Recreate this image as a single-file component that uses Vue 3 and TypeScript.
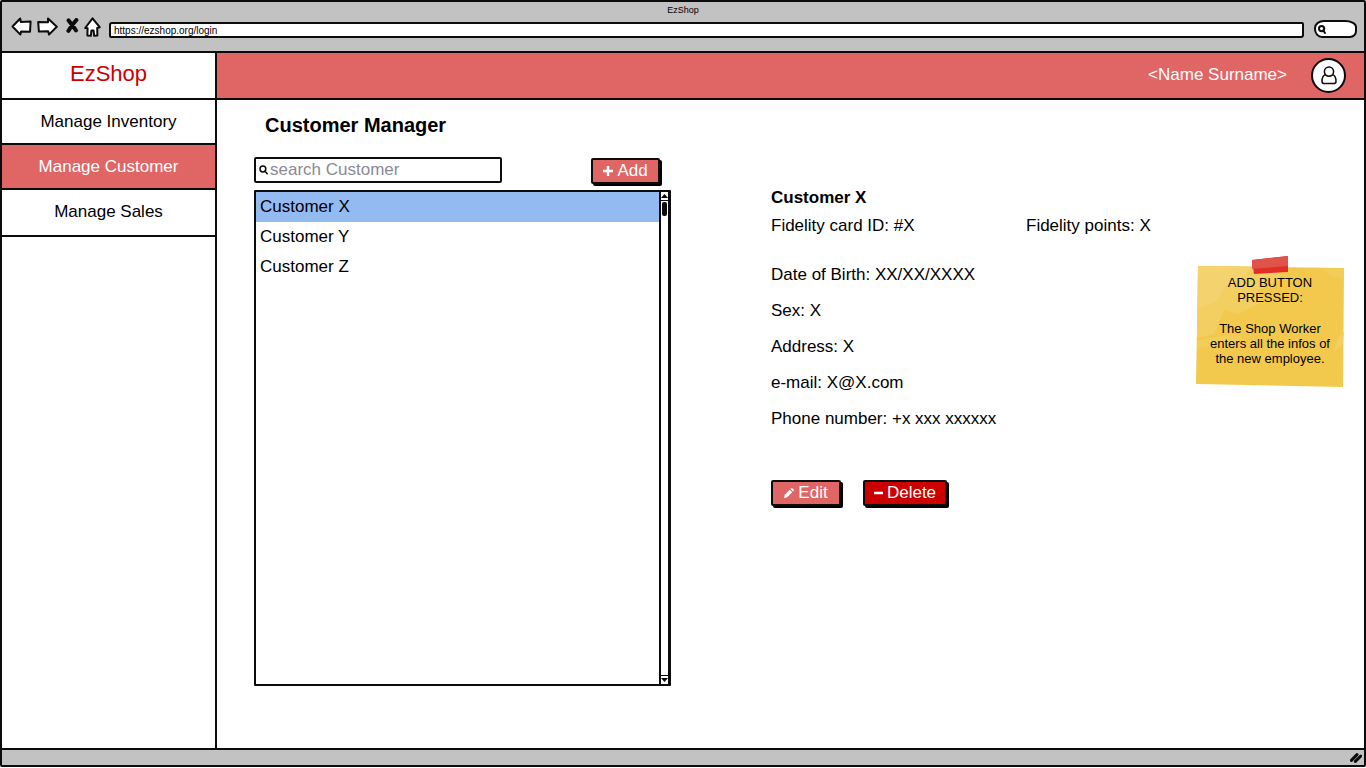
<script setup lang="ts">
import { ref } from 'vue'

interface Customer {
  name: string
  card: string
  points: string
  facts: { label: string; value: string }[]
}

const facts = [
  { label: 'Date of Birth:', value: 'XX/XX/XXXX' },
  { label: 'Sex:', value: 'X' },
  { label: 'Address:', value: 'X' },
  { label: 'e-mail:', value: 'X@X.com' },
  { label: 'Phone number:', value: '+x xxx xxxxxx' },
]

const customers: Customer[] = ['X', 'Y', 'Z'].map((letter) => ({
  name: `Customer ${letter}`,
  card: '#X',
  points: 'X',
  facts,
}))

const sections = ['Manage Inventory', 'Manage Customer', 'Manage Sales']
const activeSection = ref('Manage Customer')
const selected = ref(0)
const address = ref('https://ezshop.org/login')
const query = ref('')
const webQuery = ref('')
</script>

<template>
  <div class="window">
    <header class="chrome">
      <p class="window-title">EzShop</p>
      <div class="toolbar">
        <button class="tool" type="button" aria-label="Back">
          <svg width="21" height="19" viewBox="0 0 21 19"><path d="M1.5 9.5 9.2 1.5 9.8 5 19.6 4.6 19 14.8 10 14.6 9.4 17.6Z" /></svg>
        </button>
        <button class="tool" type="button" aria-label="Forward">
          <svg width="21" height="19" viewBox="0 0 21 19"><path d="M1.2 5 11 5.2 11 1.6 19.8 9.8 12 17.6 11.2 14.2 1.9 14.6Z" /></svg>
        </button>
        <button class="tool stop" type="button" aria-label="Stop">
          <svg width="13" height="15" viewBox="0 0 13 15"><path d="M2.6 2.4 6.2 7 10 12.4M10.4 2 6.2 7 2.4 12.8" /></svg>
        </button>
        <button class="tool home" type="button" aria-label="Home">
          <svg width="17" height="20" viewBox="0 0 17 20"><path d="M8.5 1.4 15.7 10.2 13.2 11 13.4 18.6 10.2 18.8 9.6 13.6 7.4 13.6 6.8 18.8 3.4 18.4 3.6 11.2 1.2 11Z" /></svg>
        </button>
        <input v-model="address" class="address" type="text" aria-label="Address" />
        <label class="web-search">
          <svg width="8" height="9" viewBox="0 0 8 9"><circle cx="3.6" cy="3.6" r="2.6" /><path d="M5.4 5.4 7 8" /></svg>
          <input v-model="webQuery" type="text" aria-label="Search the web" />
        </label>
      </div>
    </header>

    <div class="topbar">
      <a class="brand" href="#">EzShop</a>
      <div class="account">
        <span class="account-name">&lt;Name Surname&gt;</span>
        <button class="avatar" type="button" aria-label="Account">
          <svg width="16" height="19" viewBox="0 0 16 19">
            <circle cx="8" cy="5.6" r="4.6" />
            <path d="M4.4 8.6C2.2 9.4 1 11.6 1 15.2 1 16.8 1.8 17.6 3.2 17.6H12.8C14.2 17.6 15 16.8 15 15.2 15 11.6 13.8 9.4 11.6 8.6" />
          </svg>
        </button>
      </div>
    </div>

    <div class="body">
      <nav class="sidebar">
        <a
          v-for="section in sections"
          :key="section"
          href="#"
          :class="{ active: section === activeSection }"
          @click.prevent="activeSection = section"
        >{{ section }}</a>
      </nav>

      <main class="main">
        <section class="browser">
          <h1>Customer Manager</h1>
          <div class="actions">
            <label class="search">
              <svg width="9" height="10" viewBox="0 0 9 10"><circle cx="3.9" cy="4" r="2.9" /><path d="M6 6.2 8.2 8.8" /></svg>
              <input v-model="query" type="text" placeholder="search Customer" aria-label="Search customer" />
            </label>
            <button class="btn add" type="button">
              <svg width="10" height="10" viewBox="0 0 10 10"><path d="M5 0V10M0 5H10" /></svg>
              Add
            </button>
          </div>
          <div class="listbox">
            <ul>
              <li v-for="(customer, index) in customers" :key="customer.name">
                <button type="button" :class="{ chosen: index === selected }" @click="selected = index">
                  {{ customer.name }}
                </button>
              </li>
            </ul>
            <div class="scrollbar">
              <button type="button" aria-label="Scroll up">
                <svg width="7" height="4" viewBox="0 0 7 4"><path d="M3.5 0 7 4H0Z" /></svg>
              </button>
              <div class="track"><div class="thumb"></div></div>
              <button type="button" aria-label="Scroll down">
                <svg width="7" height="4" viewBox="0 0 7 4"><path d="M0 0H7L3.5 4Z" /></svg>
              </button>
            </div>
          </div>
        </section>

        <section class="detail">
          <h2>{{ customers[selected].name }}</h2>
          <div class="fidelity">
            <p>Fidelity card ID: {{ customers[selected].card }}</p>
            <p>Fidelity points: {{ customers[selected].points }}</p>
          </div>
          <div class="facts">
            <p v-for="fact in customers[selected].facts" :key="fact.label">{{ fact.label }} {{ fact.value }}</p>
          </div>
          <div class="buttons">
            <button class="btn edit" type="button">
              <svg width="10" height="10" viewBox="0 0 10 10"><path class="solid" d="M0 10 .7 6.8 5.7 1.8 8.2 4.3 3.2 9.3ZM6.4 1.1 7.3.2Q7.8-.2 8.4.3L9.7 1.6Q10.2 2.2 9.8 2.7L8.9 3.6Z" /></svg>
              Edit
            </button>
            <button class="btn delete" type="button">
              <svg width="9" height="10" viewBox="0 0 9 10"><path d="M0 5H9" /></svg>
              Delete
            </button>
          </div>
        </section>

        <aside class="note">
          <svg class="paper" viewBox="0 0 148 132" preserveAspectRatio="none" aria-hidden="true">
            <path d="M2 10 148 12 147 131 0 128Z" fill="#f2c94c" />
            <path d="M2 10 92 11 80 26 62 34 66 46 42 58 28 54 18 78 1 82Z" fill="#f3ce60" />
            <path d="M2 10 56 11 48 22 30 30 20 46 2 52Z" fill="#f4d26e" />
            <path d="M1 84 28 80 42 78 48 84 30 88 1 92Z" fill="#f3cd5a" />
            <path d="M148 76 142 82 138 96 147 88Z" fill="#f4cf62" />
            <path d="M124 12 148 13 148 22 136 20Z" fill="#f3cd5a" />
            <path d="M56 4 92 0 92 16 58 18Z" fill="#df2f26" />
            <path d="M56 4 92 0 92 10 56 13Z" fill="#e0534b" />
          </svg>
          <p>ADD BUTTON<br />PRESSED:</p>
          <p>The Shop Worker<br />enters all the infos of<br />the new employee.</p>
        </aside>
      </main>
    </div>

    <footer class="statusbar">
      <svg width="12" height="10" viewBox="0 0 12 10" aria-hidden="true"><path d="M1.4 7.4 7 1.6M5.4 8.4 10.8 3" /></svg>
    </footer>
  </div>
</template>

<style>
body {
  margin: 0;
  background: #fff;
}
</style>

<style scoped>
* {
  box-sizing: border-box;
}

.window {
  --ink: #0c0c0c;
  --coral: #e06666;
  --red: #cc0000;
  --grey: #c2c2c2;
  display: flex;
  flex-direction: column;
  min-height: calc(100vh - 1px);
  border: 2px solid var(--ink);
  border-radius: 2px;
  font-family: "Liberation Sans", Arial, sans-serif;
  font-size: 17px;
  line-height: 20px;
  color: #000;
}

h1,
h2,
p,
ul {
  margin: 0;
  padding: 0;
}

button,
input {
  font: inherit;
  color: inherit;
  padding: 0;
  border: 0;
  background: none;
}

a {
  color: inherit;
  text-decoration: none;
}

svg {
  display: block;
  flex: none;
  fill: none;
  stroke: var(--ink);
  stroke-width: 2;
  stroke-linejoin: round;
  stroke-linecap: round;
}

.chrome {
  height: 51px;
  background: var(--grey);
  border-bottom: 2px solid var(--ink);
}

.window-title {
  height: 15px;
  font-size: 9px;
  line-height: 16px;
  text-align: center;
}

.toolbar {
  display: flex;
  align-items: flex-start;
  padding: 0 7px 0 9px;
}

.tool {
  margin-right: 5px;
}

.tool svg {
  fill: #fff;
}

.stop {
  margin: 1px 5px 0 3px;
}

.stop svg {
  fill: none;
  stroke-width: 4;
}

.home {
  margin-right: 8px;
}

.address {
  flex: 1;
  min-width: 0;
  height: 16px;
  margin: 5px 10px 0 0;
  padding: 0 3px;
  font-size: 10px;
  line-height: 12px;
  background: #fff;
  border: 2px solid var(--ink);
  border-radius: 3px 2px 3px 2px;
}

.web-search {
  display: flex;
  align-items: center;
  width: 43px;
  height: 18px;
  margin-top: 3px;
  padding-left: 2px;
  background: #fff;
  border: 2px solid var(--ink);
  border-radius: 10px 12px 7px 8px / 8px 7px 7px 9px;
}

.web-search input {
  width: 24px;
}

.topbar {
  display: flex;
  height: 47px;
  border-bottom: 2px solid var(--ink);
}

.brand {
  width: 215px;
  border-right: 2px solid var(--ink);
  font-size: 22px;
  line-height: 41px;
  text-align: center;
  color: var(--red);
}

.account {
  flex: 1;
  display: flex;
  align-items: center;
  justify-content: flex-end;
  gap: 24px;
  padding-right: 18px;
  background: var(--coral);
  color: #fff;
}

.account-name {
  padding-bottom: 2px;
}

.avatar {
  display: grid;
  place-items: center;
  width: 35px;
  height: 35px;
  background: #fff;
  border: 2px solid var(--ink);
  border-radius: 50%;
}

.avatar svg {
  stroke-width: 1.5;
}

.body {
  flex: 1;
  display: flex;
}

.sidebar {
  width: 215px;
  border-right: 2px solid var(--ink);
}

.sidebar a {
  display: block;
  height: 45px;
  border-bottom: 2px solid var(--ink);
  line-height: 43px;
  text-align: center;
}

.sidebar a:last-child {
  height: 47px;
}

.sidebar .active {
  background: var(--coral);
  color: #fff;
}

.main {
  flex: 1;
  display: flex;
  padding: 0 20px 62px 37px;
}

.browser {
  flex: 417;
  display: flex;
  flex-direction: column;
  margin-right: 100px;
}

h1 {
  padding: 13px 11px 0;
  font-size: 20px;
  line-height: 24px;
}

.actions {
  display: flex;
  justify-content: space-between;
  padding: 20px 11px 6px 0;
}

.search {
  display: flex;
  align-items: center;
  gap: 2px;
  width: 61%;
  height: 26px;
  padding: 0 3px;
  border: 2px solid var(--ink);
  border-radius: 2px;
}

.search svg {
  stroke-width: 1.5;
}

.search input {
  flex: 1;
  min-width: 0;
}

.search input::placeholder {
  color: #8e8a92;
  opacity: 1;
}

.btn {
  display: flex;
  align-items: center;
  justify-content: center;
  height: 26px;
  gap: 4px;
  border: 2px solid var(--ink);
  border-radius: 2px;
  box-shadow: 2px 2px 0 #000;
  background: var(--coral);
  color: #fff;
}

.btn svg {
  stroke: #fff;
  stroke-width: 2.5;
  stroke-linecap: butt;
}

.btn .solid {
  fill: #fff;
  stroke: none;
}

.add {
  width: 69px;
  margin-top: 1px;
}

.edit {
  width: 70px;
}

.delete {
  width: 84px;
  background: var(--red);
}

.listbox {
  flex: 1;
  display: flex;
  border: 2px solid var(--ink);
  border-right-width: 3px;
  border-radius: 1px;
}

.listbox ul {
  flex: 1;
  list-style: none;
}

.listbox li button {
  display: block;
  width: 100%;
  height: 30px;
  padding-left: 4px;
  text-align: left;
}

.listbox li .chosen {
  background: #94baf2;
}

.scrollbar {
  display: flex;
  flex-direction: column;
  width: 9px;
  border-left: 2px solid var(--ink);
}

.scrollbar button {
  display: grid;
  place-items: center;
  height: 8px;
}

.scrollbar svg {
  fill: var(--ink);
  stroke: none;
}

.track {
  flex: 1;
  padding: 1px;
  border: solid var(--ink);
  border-width: 1px 0;
}

.thumb {
  height: 14px;
  background: var(--ink);
  border-radius: 2px;
}

.detail {
  flex: 425;
  padding-top: 88px;
}

h2 {
  font-size: 17px;
  line-height: 20px;
}

.fidelity {
  display: grid;
  grid-template-columns: 3fr 2fr;
  margin: 8px 0 29px;
}

.facts {
  display: grid;
  gap: 16px;
}

.buttons {
  display: flex;
  gap: 22px;
  margin-top: 51px;
}

.note {
  position: relative;
  align-self: flex-start;
  width: 148px;
  margin-top: 156px;
  padding: 19px 0 22px;
  font-size: 13px;
  line-height: 15px;
  text-align: center;
}

.note p + p {
  margin-top: 16px;
}

.note p {
  position: relative;
}

.paper {
  position: absolute;
  inset: 0;
  width: 100%;
  height: 100%;
  stroke: none;
}

.paper path {
  stroke: none;
}

.statusbar {
  display: flex;
  align-items: center;
  justify-content: flex-end;
  height: 17px;
  padding-right: 2px;
  background: var(--grey);
  border-top: 2px solid var(--ink);
}

.statusbar svg {
  stroke-width: 3;
}
</style>
